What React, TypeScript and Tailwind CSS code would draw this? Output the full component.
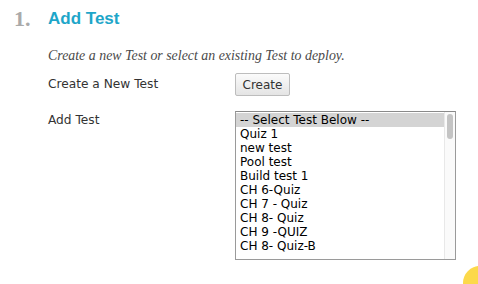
const tests = [
  "-- Select Test Below --",
  "Quiz 1",
  "new test",
  "Pool test",
  "Build test 1",
  "CH 6-Quiz",
  "CH 7 - Quiz",
  "CH 8- Quiz",
  "CH 9 -QUIZ",
  "CH 8- Quiz-B",
];

export default function App() {
  return (
    <div className="relative w-[478px] h-[284px] overflow-hidden bg-white font-['DejaVu_Sans',sans-serif]">
      {/* step heading */}
      <div className="flex h-[38px] items-center pl-[14px]">
        <span className="w-[34px] text-[22px] leading-[24px] font-bold text-[#aaaaaa] font-['Liberation_Serif',serif]">
          1.
        </span>
        <span className="text-[17px] leading-[24px] font-bold text-[#1ea6c9] font-['Liberation_Sans',sans-serif]">
          Add Test
        </span>
      </div>

      <div className="pl-[48px]">
        <p className="mt-[10px] text-[13.9px] italic text-[#4a4a4a] font-['Liberation_Serif',serif] leading-[16px]">
          Create a new Test or select an existing Test to deploy.
        </p>

        <div className="mt-[9px] flex">
          <div className="w-[187px] pt-[2px] text-[12.2px] text-[#333333]">
            Create a New Test
          </div>
          <button className="h-[23px] w-[55px] rounded-[2px] border border-[#bdbdbd] bg-gradient-to-b from-[#fbfbfb] to-[#e4e4e4] text-[12px] text-[#333333]">
            Create
          </button>
        </div>

        <div className="mt-[15px] flex">
          <div className="w-[187px] text-[12.2px] text-[#333333]">
            Add Test
          </div>
          <div className="flex h-[149px] w-[221px] border border-[#9a9a9a] border-t-[#8a8a8a]">
            <div className="flex-1 pt-[1px]">
              {tests.map((t, i) => (
                <div
                  key={t}
                  className={
                    i === 0
                      ? "h-[14px] pl-[4px] text-[12px] leading-[14px] text-black bg-[#d4d4d4]"
                      : "h-[14px] pl-[4px] text-[12px] leading-[14px] text-black"
                  }
                >
                  {t}
                </div>
              ))}
            </div>
            <div className="w-[11px] border-l border-[#e8e8e8] bg-[#fafafa] pt-[2px] flex justify-center">
              <div className="h-[25px] w-[6px] rounded-full bg-[#c4c4c4]" />
            </div>
          </div>
        </div>
      </div>

      <div className="absolute left-[463px] top-[266px] h-[34px] w-[34px] rounded-full bg-[#fcd94a]" />
    </div>
  );
}
